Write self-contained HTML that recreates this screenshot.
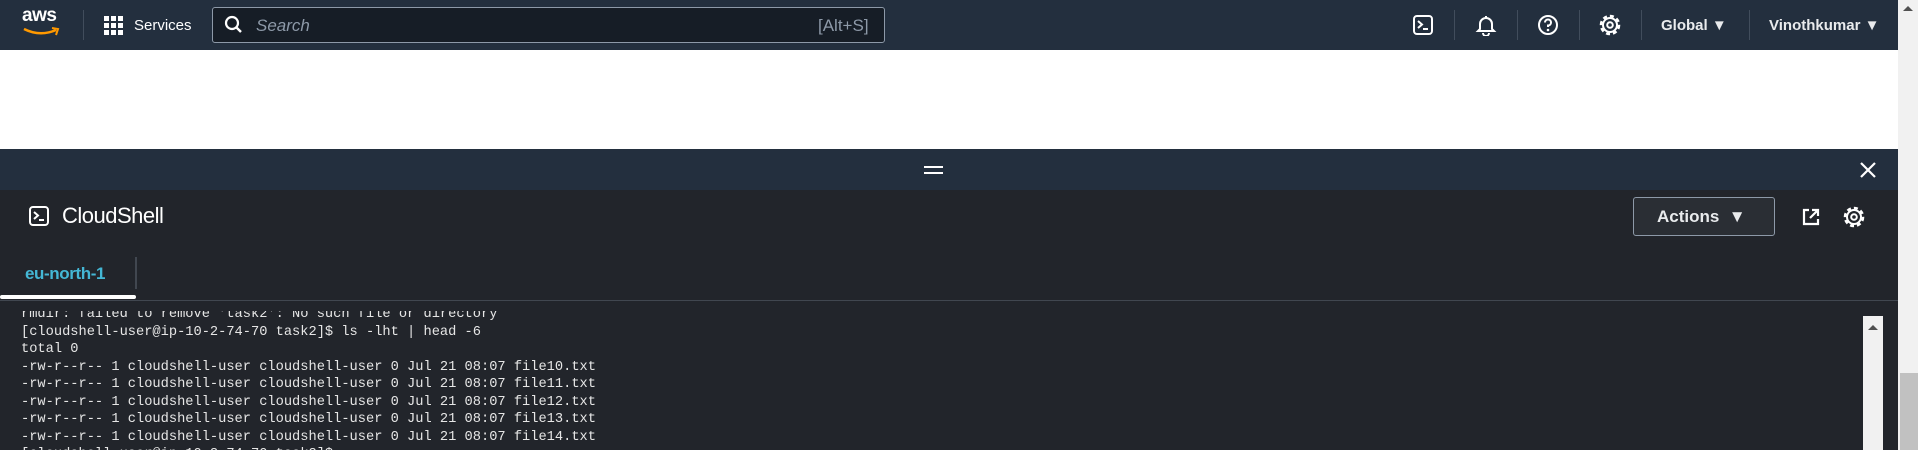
<!DOCTYPE html>
<html><head><meta charset="utf-8"><style>
*{margin:0;padding:0;box-sizing:border-box}
body{width:1918px;height:450px;overflow:hidden;background:#fff;font-family:"Liberation Sans",sans-serif;position:relative}
.a{position:absolute}
.hdr{left:0;top:0;width:1898px;height:50px;background:#232f3e}
.vd{width:1px;background:#414d5c;top:10px;height:30px}
.t{color:#e9ebed;font-size:15px;font-weight:bold}
.term{font-family:"Liberation Mono",monospace;font-size:13.7px;color:#e6e6e6;white-space:pre;line-height:17.5px}
</style></head><body>
<div class="a hdr"></div>
<div class="a" style="left:22px;top:5px;color:#fff;font-size:19px;font-weight:bold;letter-spacing:-0.5px">aws</div>
<svg class="a" style="left:22px;top:27px" width="40" height="12"><path d="M2 2 Q18 10 34 3" stroke="#ff9900" stroke-width="2.5" fill="none"/><path d="M30 1 L36 2 L34 8" stroke="#ff9900" stroke-width="2" fill="none"/></svg>
<div class="a vd" style="left:83px"></div>
<svg class="a" style="left:104px;top:16px" width="20" height="20" fill="#fff"><rect x="0" y="0" width="5" height="5"/><rect x="7" y="0" width="5" height="5"/><rect x="14" y="0" width="5" height="5"/><rect x="0" y="7" width="5" height="5"/><rect x="7" y="7" width="5" height="5"/><rect x="14" y="7" width="5" height="5"/><rect x="0" y="14" width="5" height="5"/><rect x="7" y="14" width="5" height="5"/><rect x="14" y="14" width="5" height="5"/></svg>
<div class="a" style="left:134px;top:17px;color:#fff;font-size:15px">Services</div>
<div class="a" style="left:212px;top:7px;width:673px;height:36px;background:#161d26;border:1px solid #8d99a8;border-radius:3px"></div>
<svg class="a" style="left:224px;top:15px" width="20" height="20"><circle cx="8" cy="8" r="6" stroke="#fff" stroke-width="2.2" fill="none"/><path d="M12.5 12.5 L17 17" stroke="#fff" stroke-width="2.4"/></svg>
<div class="a" style="left:256px;top:16px;color:#8d99a8;font-size:17px;font-style:italic">Search</div>
<div class="a" style="left:818px;top:16px;color:#8d99a8;font-size:17px">[Alt+S]</div>
<svg class="a" style="left:1413px;top:15px" width="20" height="20"><rect x="1" y="1" width="18" height="18" rx="3" stroke="#fff" stroke-width="2" fill="none"/><path d="M5 6 L9 9.5 L5 13 M10 14 H15" stroke="#fff" stroke-width="2" fill="none"/></svg>
<div class="a vd" style="left:1454px"></div>
<svg class="a" style="left:1475px;top:14px" width="22" height="22"><path d="M11 2 V4 M5 15 V10 A6 6 0 0 1 17 10 V15 L19 17 H3 Z M8 19 A3 3 0 0 0 14 19" stroke="#fff" stroke-width="2" fill="none"/></svg>
<div class="a vd" style="left:1517px"></div>
<svg class="a" style="left:1537px;top:14px" width="22" height="22"><circle cx="11" cy="11" r="9" stroke="#fff" stroke-width="2" fill="none"/><path d="M8 8.5 A3 3 0 1 1 11 11.5 V13" stroke="#fff" stroke-width="2" fill="none"/><circle cx="11" cy="16" r="1.3" fill="#fff"/></svg>
<div class="a vd" style="left:1579px"></div>
<svg class="a" style="left:1598px;top:13px" width="24" height="24"><circle cx="12" cy="12" r="9" stroke="#fff" stroke-width="2.6" fill="none" stroke-dasharray="4 3"/><circle cx="12" cy="12" r="7" stroke="#fff" stroke-width="2" fill="none"/><circle cx="12" cy="12" r="2.8" stroke="#fff" stroke-width="2" fill="none"/></svg>
<div class="a vd" style="left:1641px"></div>
<div class="a t" style="left:1661px;top:17px">Global ▼</div>
<div class="a vd" style="left:1749px"></div>
<div class="a t" style="left:1769px;top:17px">Vinothkumar ▼</div>
<div class="a" style="left:1898px;top:0;width:20px;height:450px;background:#f1f1f1"></div>
<div class="a" style="left:1900px;top:373px;width:18px;height:77px;background:#c1c1c1"></div>
<div class="a" style="left:1903px;top:6px;width:0;height:0;border-left:5px solid transparent;border-right:5px solid transparent;border-bottom:5px solid #505050"></div>
<div class="a" style="left:0;top:149px;width:1898px;height:41px;background:#232f3e"></div>
<div class="a" style="left:924px;top:166px;width:19px;height:2px;background:#fff"></div>
<div class="a" style="left:924px;top:172px;width:19px;height:2px;background:#fff"></div>
<svg class="a" style="left:1859px;top:161px" width="18" height="18"><path d="M2 2 L16 16 M16 2 L2 16" stroke="#fff" stroke-width="2.2"/></svg>
<div class="a" style="left:0;top:190px;width:1898px;height:260px;background:#22252b"></div>
<svg class="a" style="left:29px;top:206px" width="20" height="20"><rect x="1" y="1" width="18" height="18" rx="3" stroke="#fff" stroke-width="2" fill="none"/><path d="M5 6 L9 9.5 L5 13 M10 14 H15" stroke="#fff" stroke-width="2" fill="none"/></svg>
<div class="a" style="left:62px;top:203px;color:#fff;font-size:22px;letter-spacing:-0.5px">CloudShell</div>
<div class="a" style="left:1633px;top:197px;width:142px;height:39px;border:1px solid #8d99a8;border-radius:3px;background:#2a2e34;color:#e9ebed;font-weight:bold;font-size:17px;line-height:38px;padding-left:23px">Actions &nbsp;▼</div>
<svg class="a" style="left:1801px;top:207px" width="20" height="20"><path d="M8 3 H3 V17 H17 V12" stroke="#fff" stroke-width="2.2" fill="none"/><path d="M9 11 L16 4 M11 3 H17 V9" stroke="#fff" stroke-width="2.2" fill="none"/></svg>
<svg class="a" style="left:1842px;top:205px" width="24" height="24"><circle cx="12" cy="12" r="9" stroke="#fff" stroke-width="2.6" fill="none" stroke-dasharray="4 3"/><circle cx="12" cy="12" r="7" stroke="#fff" stroke-width="2" fill="none"/><circle cx="12" cy="12" r="2.8" stroke="#fff" stroke-width="2" fill="none"/></svg>
<div class="a" style="left:25px;top:264px;color:#44b7d5;font-weight:bold;font-size:17px;letter-spacing:-0.4px">eu-north-1</div>
<div class="a" style="left:135px;top:257px;width:2px;height:32px;background:#414750"></div>
<div class="a" style="left:0;top:300px;width:1898px;height:1px;background:#414750"></div>
<div class="a" style="left:0;top:295px;width:136px;height:4px;background:#fff;border-radius:2px"></div>
<div class="a" style="left:1863px;top:316px;width:20px;height:134px;background:#f1f1f1"></div>
<div class="a" style="left:1868px;top:325px;width:0;height:0;border-left:5px solid transparent;border-right:5px solid transparent;border-bottom:5px solid #505050"></div>
<div class="a" style="left:0;top:301px;width:1860px;height:149px;overflow:hidden">
<div class="a term" style="left:21px;top:5px">rmdir: failed to remove 'task2': No such file or directory
[cloudshell-user@ip-10-2-74-70 task2]$ ls -lht | head -6
total 0
-rw-r--r-- 1 cloudshell-user cloudshell-user 0 Jul 21 08:07 file10.txt
-rw-r--r-- 1 cloudshell-user cloudshell-user 0 Jul 21 08:07 file11.txt
-rw-r--r-- 1 cloudshell-user cloudshell-user 0 Jul 21 08:07 file12.txt
-rw-r--r-- 1 cloudshell-user cloudshell-user 0 Jul 21 08:07 file13.txt
-rw-r--r-- 1 cloudshell-user cloudshell-user 0 Jul 21 08:07 file14.txt
[cloudshell-user@ip-10-2-74-70 task2]$ </div>
</div>
<div class="a" style="left:0;top:301px;width:1860px;height:10px;background:#22252b"></div>
</body></html>
